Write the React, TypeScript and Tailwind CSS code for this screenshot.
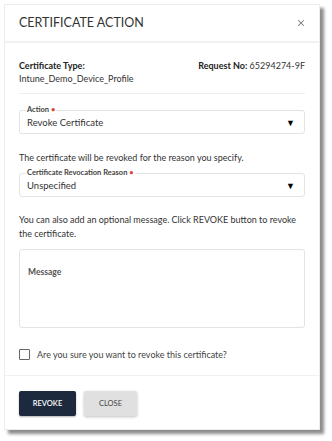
import { X } from 'lucide-react'

function SelectField({ label, value }: { label: string; value: string }) {
  return (
    <div className="relative h-[24px] rounded-[3px] border border-[#e3e3e3] pl-[7px] pr-[9px] flex items-end pb-[4px]">
      <span className="absolute left-[6px] top-[-6px] bg-white px-[1px] text-[7.5px] font-bold leading-[10px] text-[#444]">
        {label} <span className="text-[#e0423a]">•</span>
      </span>
      <span className="flex-1 text-[9.5px] leading-[12px] text-[#333]">{value}</span>
      <span className="text-[9px] leading-[12px] text-black">▼</span>
    </div>
  )
}

export default function App() {
  return (
    <div className="h-[441px] w-[332px] bg-white pl-[4px] pt-[4px] font-['Lato',sans-serif]">
      <div className="flex h-[426px] w-[316px] flex-col border border-[#ececec] bg-white shadow-[4px_4px_3px_rgba(0,0,0,0.45)]">
        {/* Header */}
        <div className="flex h-[38px] items-center justify-between border-b-[2px] border-[#f1f1f1] pl-[14px] pr-[13px]">
          <h2 className="text-[12.5px] font-normal text-[#333]">CERTIFICATE ACTION</h2>
          <X className="h-[10px] w-[10px] text-[#777]" strokeWidth={2.5} />
        </div>

        {/* Body */}
        <div className="flex-1 px-[14px] pt-[16px]">
          <div className="flex justify-between border-b border-[#eeeeee] pb-[8px] text-[9px] leading-[13px] text-[#333]">
            <div>
              <p className="font-bold text-[#222]">Certificate Type:</p>
              <p>Intune_Demo_Device_Profile</p>
            </div>
            <p>
              <span className="font-bold text-[#222]">Request No:</span> 65294274-9F
            </p>
          </div>

          <div className="mt-[16px]">
            <SelectField label="Action" value="Revoke Certificate" />
          </div>

          <p className="mt-[17px] text-[9px] leading-[13px] text-[#333]">
            The certificate will be revoked for the reason you specify.
          </p>

          <div className="mt-[9px]">
            <SelectField label="Certificate Revocation Reason" value="Unspecified" />
          </div>

          <p className="mt-[16px] text-[9px] leading-[14px] text-[#333]">
            You can also add an optional message. Click REVOKE button to revoke the certificate.
          </p>

          <div className="mt-[8px] h-[79px] rounded-[3px] border border-[#e3e3e3] px-[8px] pt-[7px]">
            <span className="text-[8.5px] font-bold text-[#555]">Message</span>
          </div>

          <label className="mt-[20px] flex items-center gap-[7px] text-[9px] text-[#444]">
            <span className="h-[11px] w-[11px] rounded-[1px] border border-[#666] bg-white" />
            Are you sure you want to revoke this certificate?
          </label>
        </div>

        {/* Footer */}
        <div className="flex h-[54px] items-start gap-[8px] border-t border-[#f0f0f0] pl-[14px] pt-[15px]">
          <button className="h-[25px] w-[57px] rounded-[2px] bg-[#1d2a3e] text-[7.5px] font-semibold text-white shadow-[0_1px_2px_rgba(0,0,0,0.3)]">
            REVOKE
          </button>
          <button className="h-[25px] w-[53px] rounded-[2px] bg-[#e0e0e0] text-[7.5px] text-[#444] shadow-[0_1px_3px_rgba(0,0,0,0.25)]">
            CLOSE
          </button>
        </div>
      </div>
    </div>
  )
}
